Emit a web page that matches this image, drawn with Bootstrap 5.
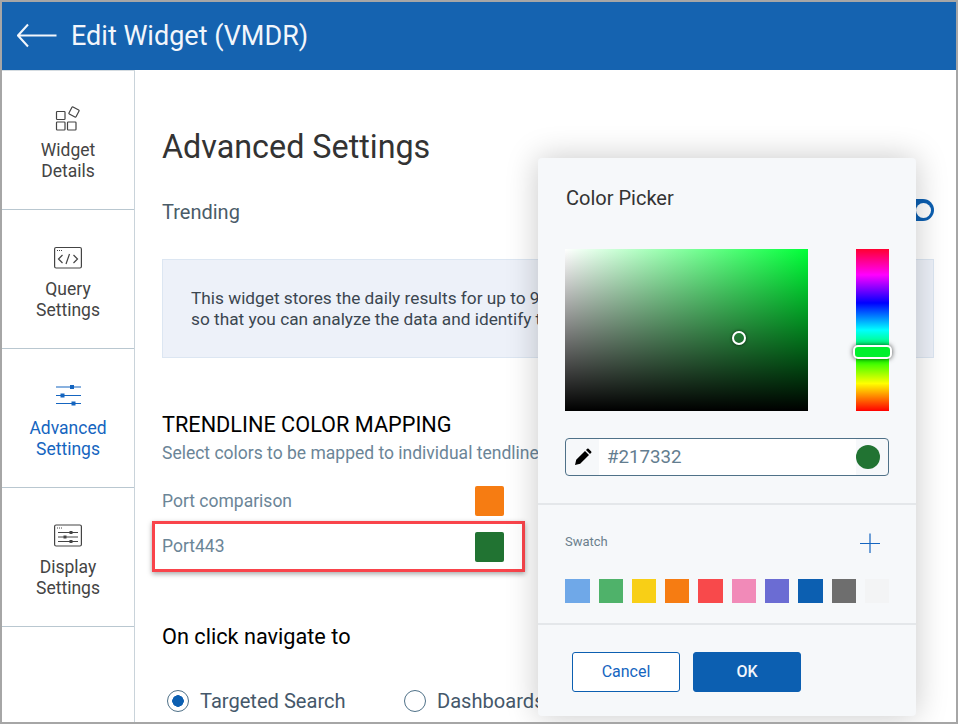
<!DOCTYPE html>
<html lang="en">
<head>
<meta charset="utf-8">
<title>Edit Widget</title>
<link href="https://cdn.jsdelivr.net/npm/bootstrap@5.3.0/dist/css/bootstrap.min.css" rel="stylesheet">
<style>
html,body{margin:0;background:#fff}
body{font-family:Roboto,"Liberation Sans",sans-serif;color:#333}
.frame{width:958px;height:724px;border:2px solid #a6a6a6;overflow:hidden;position:relative;box-sizing:border-box;background:#fff}
.topbar{height:68px;background:#1563b0;color:#f2f6fb;padding-left:15px;gap:14px}
.topbar-title{font-size:27px;line-height:32px;margin:0;font-weight:400}
.body-wrap{height:652px}
.side{width:133px;flex:none;border-right:1px solid #c9d3da;border-top:1px solid #d5dce1}
.side-item{height:139px;padding-top:33px;border-bottom:1px solid #b9c7d0;color:#444;font-size:17.500px;line-height:21px;text-align:center;text-decoration:none;display:block}
.side-item:hover{color:#444}
.side-item svg{display:block;margin:0 auto 6px;width:28px;height:30px}
.side-item.current,.side-item.current:hover{color:#1565c0}
.main{flex:1 1 auto;padding:57px 22px 0 27px;min-width:0;overflow:hidden}
.page-title{font-size:32.300px;line-height:40px;margin:0;font-weight:400;color:#333}
.trend-row{margin-top:33px;height:24px;color:#4a5c68;font-size:20px;line-height:24px}
.toggle-shape{width:40px;height:22px;padding:3.500px;border-radius:11px;background:#0c5fb1;margin-top:-4px;justify-content:flex-end}
.toggle-knob{width:15px;height:15px;border-radius:50%;background:#fff}
.info-box{margin-top:35px;background:#edf1f9;border:1px solid #dce6f2;padding:28px;height:99px;font-size:17.250px;line-height:21px;color:#3b4650;white-space:nowrap;overflow:hidden}
.map-title{margin:55px 0 0;font-size:21.700px;line-height:24px;font-weight:400;color:#000}
.map-sub{margin:5px 0 0;font-size:17.500px;line-height:22px;color:#6b8597;white-space:nowrap}
.map-row{width:342px;height:30px;margin-top:22px;color:#6b8597;font-size:17.500px;position:relative}
.map-row + .map-row{margin-top:16px}
.map-row-lift{margin-top:-2px}
.tile{width:29px;height:30px;border-radius:2px}
.callout{position:absolute;left:-10px;top:-11px;width:373px;height:51px;border:3px solid #f9444b;box-shadow:0 2px 5px rgba(0,0,0,.35);pointer-events:none}
.nav-title{margin:63px 0 0;font-size:21.700px;line-height:24px;font-weight:400;color:#000}
.radio-row{margin-top:40px;height:24px;font-size:20.100px;color:#45586a}
.radio-row .form-check-input{width:22px;height:22px;margin:0 11px 0 0;border:1px solid #4f7188;background:#fff;float:none;flex:none}
.radio-row .form-check-input:checked{background:radial-gradient(circle,#0c5fb1 0 5.500px,#fff 6px);border-color:#4f7188}
.radio-one{margin-left:5px;width:237px}
.panel{position:absolute;left:536px;top:156px;width:378px;height:558px;background:#f6f8fa;border-radius:4px;box-shadow:0 0 32px rgba(0,0,0,.22);color:#333}
.panel-head{padding:28px 27px 0 28px;height:91px;font-size:20px;line-height:24px}
.picker-row{padding:0 27px;height:162px}
.sat-box{width:243px;height:162px;position:relative;background:linear-gradient(to top,#000,transparent),linear-gradient(to right,#fff,#00ff38)}
.sat-dot{position:absolute;left:167px;top:82px;width:14px;height:14px;border:2px solid #fff;border-radius:50%;box-shadow:0 0 3px rgba(0,0,0,.8)}
.hue-bar{width:33px;height:162px;position:relative;background:linear-gradient(to bottom,#ff0030 0,#ff00ff 16%,#0000ff 33.300%,#00ffff 50%,#00ff00 66.600%,#ffff00 83%,#ff0000 100%)}
.hue-grip{position:absolute;left:-3px;top:96px;width:39px;height:14px;background:#00f02c;border:2px solid #fff;border-radius:5px;box-shadow:0 0 5px rgba(0,0,0,.7)}
.hex-field{margin:27px 27px 0;height:38px;border:1px solid #4f7188;border-radius:4px;overflow:hidden}
.hex-pen{width:33px;flex:none}
.hex-value{flex:1 1 auto;background:#fff;font-size:18.700px;line-height:36px;color:#637d8f;padding-left:8px}
.hex-dot-wrap{width:32px;flex:none}
.hex-dot{width:24px;height:24px;border-radius:50%;background:#217332}
.rule-line{height:2px;background:#e4e7ea}
.rule-one{margin-top:27px}
.swatch-area{height:118px;padding:0 27px}
.swatch-head{height:74px;padding-top:26px;color:#6b7f8d;font-size:13px;line-height:22px}
.swatch-plus{margin-top:2px;margin-right:9px}
.swatch-list{gap:0}
.chip{height:24px;width:24px;flex:none}
.chip.wide{width:25px}
.panel-actions{padding:27px 34px 0;gap:13px}
.panel-actions .btn{width:108px;height:40px;border-radius:3px;font-size:16px;padding:0;line-height:38px}
.btn-cancel{background:#fff;border:1px solid #0c5fb1;color:#1565c0}
.btn-cancel:hover{background:#fff;color:#1565c0;border-color:#0c5fb1}
.btn-okay{background:#0c5fb1;border:1px solid #0c5fb1;color:#f2f6fb;font-weight:500}
.btn-okay:hover{background:#0c5fb1;color:#f2f6fb;border-color:#0c5fb1}
</style>
</head>
<body>
<div class="frame">
  <header class="topbar d-flex align-items-center">
    <svg width="40" height="26" viewBox="0 0 40 26" fill="none" stroke="#f2f6fb" stroke-width="2" aria-hidden="true"><path d="M1 12.500H39.500M11 1.500L1 12.500L11 23.500"/></svg>
    <h1 class="topbar-title">Edit Widget (VMDR)</h1>
  </header>
  <div class="body-wrap d-flex">
    <nav class="side">
      <a class="side-item" href="#">
        <svg viewBox="54 104 28 30" fill="none" stroke="#444" stroke-width="1.200" aria-hidden="true"><rect x="56.500" y="111.500" width="8.500" height="8" rx=".8"/><rect x="56.500" y="122" width="8.500" height="8" rx=".8"/><rect x="67.500" y="122" width="8.500" height="8" rx=".8"/><rect x="70" y="108" width="8" height="8" rx=".8" transform="rotate(28 74 112)"/></svg>
        Widget<br>Details
      </a>
      <a class="side-item" href="#">
        <svg viewBox="54 243 28 30" fill="none" stroke="#444" aria-hidden="true"><rect x="54.600" y="247.500" width="26.800" height="20.500" rx="1.500" stroke-width="1.200"/><path d="M57 250.500h1M59 250.500h1M61 250.500h1" stroke-width="1"/><path d="M62.500 255l-4 4 4 4M73.500 255l4 4-4 4M69.500 254l-3.500 10" stroke-width="1.200"/></svg>
        Query<br>Settings
      </a>
      <a class="side-item current" href="#">
        <svg viewBox="54 382 28 30" fill="none" stroke="#1565c0" stroke-width="1.200" aria-hidden="true"><path d="M56 387H81M56 395.500H81M56 403.500H81"/><rect x="70" y="385" width="4" height="4" fill="#1565c0" stroke="none"/><rect x="60.500" y="393.500" width="4" height="4" fill="#1565c0" stroke="none"/><rect x="71.500" y="401.500" width="4" height="4" fill="#1565c0" stroke="none"/></svg>
        Advanced<br>Settings
      </a>
      <a class="side-item" href="#">
        <svg viewBox="54 521 28 30" fill="none" stroke="#444" aria-hidden="true"><rect x="54.600" y="525" width="26.800" height="21" rx="1.500" stroke-width="1.200"/><path d="M57 528h1M59 528h1M61 528h1" stroke-width="1"/><path d="M58 532.500H78M58 537H78M58 541.500H78" stroke-width="1"/><rect x="69.500" y="531" width="3" height="3" fill="#444" stroke="none"/><rect x="63.500" y="535.500" width="3" height="3" fill="#444" stroke="none"/><rect x="69.500" y="540" width="3" height="3" fill="#444" stroke="none"/></svg>
        Display<br>Settings
      </a>
    </nav>
    <main class="main">
      <h2 class="page-title">Advanced Settings</h2>
      <div class="trend-row d-flex justify-content-between align-items-center">
        <span>Trending</span>
        <span class="toggle-shape d-flex"><span class="toggle-knob"></span></span>
      </div>
      <div class="info-box">This widget stores the daily results for up to 90 days<br>so that you can analyze the data and identify trends.</div>
      <h3 class="map-title">TRENDLINE COLOR MAPPING</h3>
      <p class="map-sub">Select colors to be mapped to individual tendlines</p>
      <div class="map-row d-flex justify-content-between align-items-center">
        <span>Port comparison</span><span class="tile" style="background:#f67c12"></span>
      </div>
      <div class="map-row d-flex justify-content-between align-items-center">
        <span class="map-row-lift">Port443</span><span class="tile" style="background:#217332"></span>
        <span class="callout"></span>
      </div>
      <h3 class="nav-title">On click navigate to</h3>
      <div class="radio-row d-flex align-items-center">
        <label class="radio-one d-flex align-items-center"><input class="form-check-input" type="radio" name="nav" checked>Targeted Search</label>
        <label class="d-flex align-items-center"><input class="form-check-input" type="radio" name="nav">Dashboards</label>
      </div>
    </main>
  </div>

  <section class="panel">
    <div class="panel-head">Color Picker</div>
    <div class="picker-row d-flex justify-content-between">
      <div class="sat-box"><span class="sat-dot"></span></div>
      <div class="hue-bar"><span class="hue-grip"></span></div>
    </div>
    <div class="hex-field d-flex align-items-stretch">
      <div class="hex-pen d-flex align-items-center justify-content-center">
        <svg width="18" height="18" viewBox="0 0 18 18" aria-hidden="true"><path d="M1 17l1.200-5.200L11 3l4 4-8.800 8.800zM12 2l1.200-1.200a1 1 0 0 1 1.400 0l2.600 2.600a1 1 0 0 1 0 1.400L16 6z" fill="#000"/></svg>
      </div>
      <div class="hex-value">#217332</div>
      <div class="hex-dot-wrap d-flex align-items-center"><span class="hex-dot"></span></div>
    </div>
    <div class="rule-line rule-one"></div>
    <div class="swatch-area">
      <div class="swatch-head d-flex justify-content-between">
        <span>Swatch</span>
        <svg class="swatch-plus" width="20" height="20" viewBox="0 0 20 20" stroke="#1565c0" stroke-width="1.200" aria-hidden="true"><path d="M0 10.500H20M10 0.500V20.500"/></svg>
      </div>
      <div class="swatch-list d-flex justify-content-between">
        <span class="chip wide" style="background:#6fa8e8"></span>
        <span class="chip" style="background:#4fb26a"></span>
        <span class="chip" style="background:#f8cf16"></span>
        <span class="chip" style="background:#f67c12"></span>
        <span class="chip wide" style="background:#f8494b"></span>
        <span class="chip" style="background:#f18ab8"></span>
        <span class="chip" style="background:#6b6cd3"></span>
        <span class="chip wide" style="background:#0c5fb1"></span>
        <span class="chip" style="background:#6e6e6e"></span>
        <span class="chip" style="background:#f3f4f5"></span>
      </div>
    </div>
    <div class="rule-line"></div>
    <div class="panel-actions d-flex">
      <button type="button" class="btn btn-cancel">Cancel</button>
      <button type="button" class="btn btn-okay">OK</button>
    </div>
  </section>
</div>
<script src="https://cdn.jsdelivr.net/npm/bootstrap@5.3.0/dist/js/bootstrap.bundle.min.js"></script>
</body>
</html>
